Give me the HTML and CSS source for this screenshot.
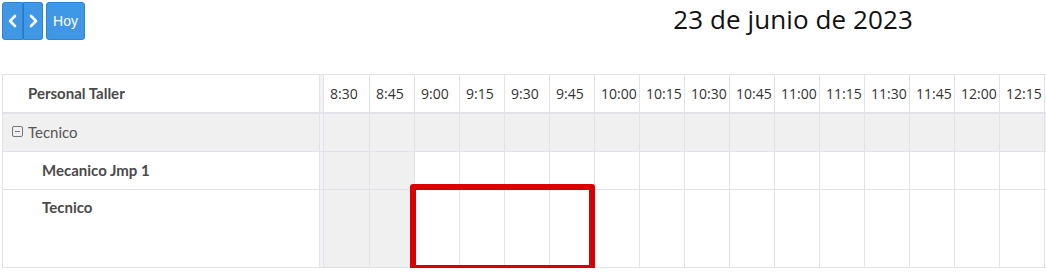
FILE: index.html
```html
<!DOCTYPE html>
<html lang="es">
<head>
<meta charset="utf-8">
<title>Calendario</title>
<link rel="stylesheet" href="styles.css">
</head>
<body>
<div class="cal">
  <div class="toolbar">
    <div class="btn-group">
      <button class="btn btn-icon" aria-label="prev">
        <svg width="12" height="14" viewBox="0 0 12 14"><path d="M8 2 L3 7 L8 12" fill="none" stroke="#fff" stroke-width="2.6" stroke-linecap="round" stroke-linejoin="round"/></svg>
      </button>
      <button class="btn btn-icon" aria-label="next">
        <svg width="12" height="14" viewBox="0 0 12 14"><path d="M4 2 L9 7 L4 12" fill="none" stroke="#fff" stroke-width="2.6" stroke-linecap="round" stroke-linejoin="round"/></svg>
      </button>
    </div>
    <button class="btn btn-today">Hoy</button>
    <h2 class="title">23 de junio de 2023</h2>
    <div class="toolbar-right"></div>
  </div>

  <div class="grid">
    <div class="row head">
      <div class="res-cell"><span class="res-label head-label">Personal Taller</span></div>
      <div class="divider"></div>
      <div class="slots">
        <div class="slot"><span>8:30</span></div>
        <div class="slot"><span>8:45</span></div>
        <div class="slot"><span>9:00</span></div>
        <div class="slot"><span>9:15</span></div>
        <div class="slot"><span>9:30</span></div>
        <div class="slot"><span>9:45</span></div>
        <div class="slot"><span>10:00</span></div>
        <div class="slot"><span>10:15</span></div>
        <div class="slot"><span>10:30</span></div>
        <div class="slot"><span>10:45</span></div>
        <div class="slot"><span>11:00</span></div>
        <div class="slot"><span>11:15</span></div>
        <div class="slot"><span>11:30</span></div>
        <div class="slot"><span>11:45</span></div>
        <div class="slot"><span>12:00</span></div>
        <div class="slot"><span>12:15</span></div>
      </div>
    </div>

    <div class="row group">
      <div class="res-cell group-cell">
        <svg class="toggle" width="11" height="11" viewBox="0 0 11 11"><rect x="0.5" y="0.5" width="10" height="10" rx="1.5" fill="none" stroke="#777" stroke-width="1"/><path d="M3 5.5 H8" stroke="#777" stroke-width="1"/></svg>
        <span class="group-label">Tecnico</span>
      </div>
      <div class="divider"></div>
      <div class="slots">
        <div class="slot"></div><div class="slot"></div><div class="slot"></div><div class="slot"></div>
        <div class="slot"></div><div class="slot"></div><div class="slot"></div><div class="slot"></div>
        <div class="slot"></div><div class="slot"></div><div class="slot"></div><div class="slot"></div>
        <div class="slot"></div><div class="slot"></div><div class="slot"></div><div class="slot"></div>
      </div>
    </div>

    <div class="row res">
      <div class="res-cell"><span class="res-label">Mecanico Jmp 1</span></div>
      <div class="divider"></div>
      <div class="slots">
        <div class="slot off"></div><div class="slot off"></div><div class="slot"></div><div class="slot"></div>
        <div class="slot"></div><div class="slot"></div><div class="slot"></div><div class="slot"></div>
        <div class="slot"></div><div class="slot"></div><div class="slot"></div><div class="slot"></div>
        <div class="slot"></div><div class="slot"></div><div class="slot"></div><div class="slot"></div>
      </div>
    </div>

    <div class="row res tall">
      <div class="res-cell"><span class="res-label">Tecnico</span></div>
      <div class="divider"></div>
      <div class="slots">
        <div class="slot off"></div><div class="slot off"></div><div class="slot"></div><div class="slot"></div>
        <div class="slot"></div><div class="slot"></div><div class="slot"></div><div class="slot"></div>
        <div class="slot"></div><div class="slot"></div><div class="slot"></div><div class="slot"></div>
        <div class="slot"></div><div class="slot"></div><div class="slot"></div><div class="slot"></div>
      </div>
    </div>

    <div class="highlight"></div>
  </div>
</div>
</body>
</html>
```

FILE: styles.css
```css
* { box-sizing: border-box; }

html, body {
  margin: 0;
  padding: 0;
  background: #fff;
  overflow: hidden;
}

.cal {
  padding: 2px 0 0 2px;
  width: 1046px;
  font-family: "Open Sans", "Liberation Sans", sans-serif;
}

.toolbar {
  display: flex;
  align-items: flex-start;
  height: 72px;
}

.btn-group {
  display: flex;
}

.btn {
  height: 38px;
  background: #3f97e5;
  border: 1px solid #2c83d2;
  color: #fff;
  padding: 0;
  margin: 0;
  font-family: "Liberation Sans", Arial, sans-serif;
  font-size: 14px;
  display: flex;
  align-items: center;
  justify-content: center;
}

.btn-icon {
  width: 20px;
}
.btn-icon:first-child {
  width: 21px;
  border-radius: 3px 0 0 3px;
}
.btn-icon:last-child {
  border-left: 1px solid #2a78c0;
  border-radius: 0 3px 3px 0;
}

.btn-today {
  margin-left: 3px;
  width: 39px;
  border-radius: 3px;
  font-size: 14px;
}

.title {
  margin: 0 0 0 auto;
  font-family: "Open Sans", sans-serif;
  font-weight: 400;
  font-size: 26px;
  line-height: 34px;
  color: #111;
  letter-spacing: 0.1px;
}

.toolbar-right {
  width: 133px;
}

.grid {
  position: relative;
  border-top: 1px solid #e2e2ea;
  border-left: 1px solid #e2e2ea;
}

.row {
  display: flex;
  border-bottom: 1px solid #e2e2ea;
}

.row.head { height: 39px; border-bottom: 2px solid #e2e2ea; }
.row.group { height: 38px; background: #f0f0f0; }
.row.res { height: 38px; }
.row.res.tall { height: 78px; }

.res-cell {
  width: 316px;
  flex: none;
  display: flex;
  align-items: center;
  padding-bottom: 2px;
  font-family: "Lato", sans-serif;
  font-size: 15px;
  color: #4a4a4a;
}

.tall .res-cell {
  align-items: flex-start;
  padding-top: 8px;
}

.res-label {
  padding-left: 39px;
  font-weight: 700;
}

.head-label {
  padding-left: 25px;
}

.group-cell {
  padding-left: 9px;
}

.toggle {
  flex: none;
  margin-right: 5px;
}

.group-label {
  font-weight: 400;
  color: #555;
}

.divider {
  flex: none;
  width: 5px;
  border-left: 1px solid #e2e2ea;
  border-right: 1px solid #e2e2ea;
  background: #f3f3f6;
}

.slots {
  display: flex;
  flex: 1;
  overflow: hidden;
}

.slot {
  flex: none;
  width: 45px;
  border-right: 1px solid #e2e2ea;
  display: flex;
  align-items: center;
  padding-left: 6px;
  padding-bottom: 1px;
  font-family: "Open Sans", sans-serif;
  font-size: 14px;
  color: #333;
}

.slot:first-child { width: 46px; }

.group .slot { background: #f0f0f0; }
.slot.off { background: #f0f0f0; }

.highlight {
  position: absolute;
  left: 407px;
  top: 109px;
  width: 185px;
  height: 87px;
  border: 6px solid #d80000;
  border-radius: 3px;
}
```
